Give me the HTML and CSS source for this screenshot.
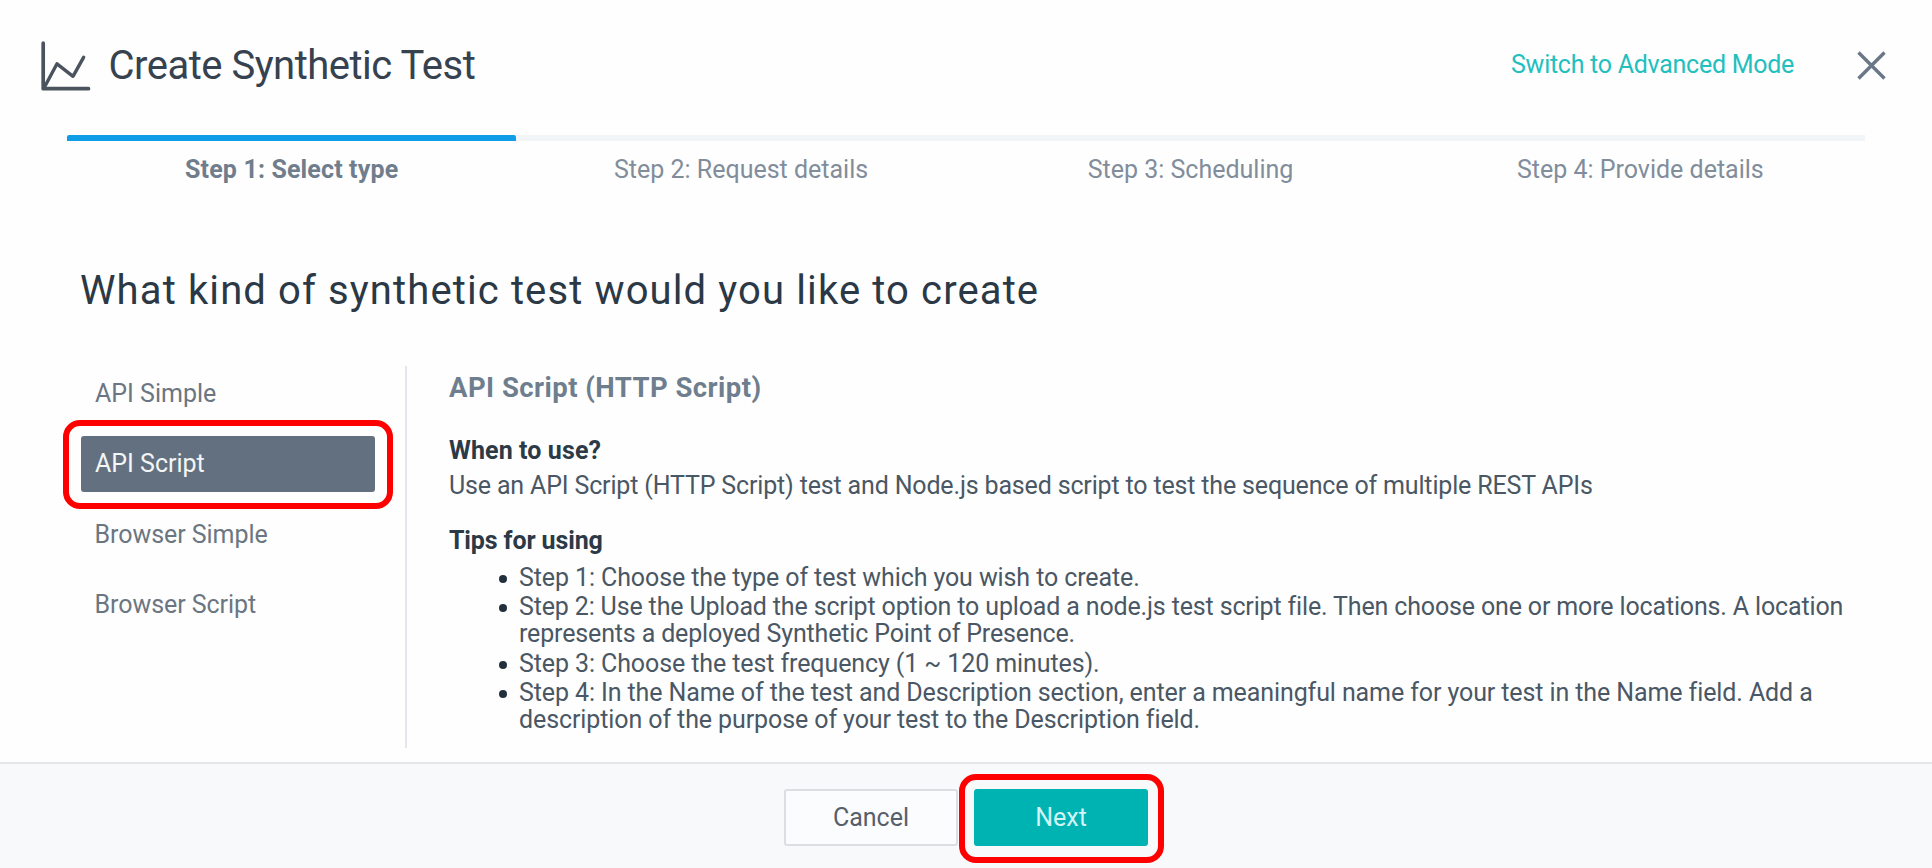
FILE: index.html
```html
<!DOCTYPE html>
<html lang="en">
<head>
<meta charset="utf-8">
<title>Create Synthetic Test</title>
<link rel="stylesheet" href="styles.css">
</head>
<body>
<div class="dialog">
  <header class="header">
    <svg class="chart-icon" width="52" height="54" viewBox="0 0 52 54" fill="none" stroke="#4b545e" stroke-linecap="round" stroke-linejoin="round">
      <path d="M4.2 4.2V49.7H49.5" stroke-width="3.7"/>
      <path d="M5 49L18 24.8L34 37.3L44.6 18.3" stroke-width="3.4"/>
    </svg>
    <h1 class="title">Create Synthetic Test</h1>
    <a class="mode-link">Switch to Advanced Mode</a>
    <svg class="close-icon" width="29" height="29" viewBox="0 0 29 29" stroke="#697788" stroke-width="3.4">
      <path d="M1.5 1.5L27.5 27.5M27.5 1.5L1.5 27.5"/>
    </svg>
  </header>

  <ol class="steps">
    <li class="step step-active">Step 1: Select type</li>
    <li class="step">Step 2: Request details</li>
    <li class="step">Step 3: Scheduling</li>
    <li class="step">Step 4: Provide details</li>
  </ol>

  <h2 class="question">What kind of synthetic test would you like to create</h2>

  <main class="main">
    <nav class="types">
      <div class="type">API Simple</div>
      <div class="type type-selected">API Script<span class="highlight"></span></div>
      <div class="type type-browser">Browser Simple</div>
      <div class="type type-browser">Browser Script</div>
    </nav>
    <section class="detail">
      <h3 class="detail-title">API Script (HTTP Script)</h3>
      <h4 class="when">When to use?</h4>
      <p class="usage">Use an API Script (HTTP Script) test and Node.js based script to test the sequence of multiple REST APIs</p>
      <h4 class="tips-title">Tips for using</h4>
      <ul class="tips">
        <li>Step 1: Choose the type of test which you wish to create.</li>
        <li class="tip-upload">Step 2: Use the Upload the script option to upload a node.js test script file. Then choose one or more locations. A location<br>represents a deployed Synthetic Point of Presence.</li>
        <li>Step 3: Choose the test frequency (1 ~ 120 minutes).</li>
        <li>Step 4: In the Name of the test and Description section, enter a meaningful name for your test in the Name field. Add a<br>description of the purpose of your test to the Description field.</li>
      </ul>
    </section>
  </main>

  <footer class="footer">
    <div class="button cancel">Cancel</div>
    <div class="button next">Next<span class="highlight"></span></div>
  </footer>
</div>
</body>
</html>
```
FILE: styles.css
```css
* { box-sizing: border-box; }

body {
  margin: 0;
  background: #fefefe;
  font-family: Roboto, "Noto Sans", sans-serif;
  font-size: 25px;
  color: #4a5764;
}

h1, h2, h3, h4, p, ul, ol { margin: 0; padding: 0; font-weight: 400; }

.dialog {
  display: flex;
  flex-direction: column;
  width: 1932px;
  height: 868px;
  overflow: hidden;
}

.header {
  display: flex;
  align-items: center;
  height: 131px;
  padding: 0 46px 0 39px;
}

.chart-icon { flex: none; }

.title {
  margin-left: 17.5px;
  font-size: 40px;
  line-height: 48px;
  letter-spacing: -0.5px;
  color: #36424f;
}

.mode-link {
  margin-left: auto;
  padding-bottom: 2px;
  line-height: 32px;
  letter-spacing: -0.27px;
  color: #22bfbf;
}

.close-icon { margin-left: 63px; }

.steps {
  display: flex;
  margin: 4px 67px 0;
  list-style: none;
}

.step {
  width: 449.4px;
  padding-top: 13px;
  border-top: 6px solid #f1f5f7;
  line-height: 32px;
  text-align: center;
  color: #818d9b;
}

.step:last-child { padding-left: 1px; }

.step-active {
  border-top: 0;
  padding-top: 19px;
  background: linear-gradient(#109de8, #109de8) 0 0 / 100% 6px no-repeat;
  border-radius: 2px;
  font-weight: 700;
  letter-spacing: 0.14px;
  color: #6f7d8d;
}

.question {
  margin: 81px 0 0 80px;
  font-size: 40px;
  line-height: 48px;
  letter-spacing: 1.12px;
  color: #2b3845;
}

.main {
  display: flex;
  height: 382px;
  margin: 51px 0 0 81px;
}

.types {
  display: flex;
  flex-direction: column;
  gap: 14.3px;
  width: 326px;
  padding-right: 30px;
  border-right: 2px solid #e3e6ea;
}

.type {
  position: relative;
  height: 56px;
  padding-left: 14px;
  line-height: 56px;
  color: #6b7682;
}

.type-selected {
  border-radius: 3px;
  background: #62707f;
  color: #f3f5f7;
}

.type-browser { padding-left: 13.5px; letter-spacing: -0.05px; }

.highlight {
  position: absolute;
  inset: -16px -18px -17px;
  border: 6px solid #f00;
  border-radius: 17px;
}

.detail { padding: 5px 0 0 42px; }

.detail-title {
  font-size: 27.5px;
  font-weight: 700;
  line-height: 34px;
  letter-spacing: 0.45px;
  color: #6f7e8e;
}

.when, .tips-title {
  font-weight: 700;
  line-height: 34px;
  color: #2c3946;
}

.when { margin-top: 29px; letter-spacing: 0.1px; }

.usage {
  margin-top: 1px;
  line-height: 34px;
  letter-spacing: -0.16px;
}

.tips-title { margin-top: 21px; letter-spacing: -0.12px; }

.tips {
  display: flex;
  flex-direction: column;
  gap: 1.9px;
  margin-top: 6px;
  padding-left: 70px;
  line-height: 27.3px;
  letter-spacing: -0.1px;
  white-space: nowrap;
  list-style: none;
}

.tips li { position: relative; }

.tips li::before {
  content: "";
  position: absolute;
  left: -20.5px;
  top: 11px;
  width: 8px;
  height: 8px;
  border-radius: 50%;
  background: #22303e;
}

.tip-upload { letter-spacing: -0.15px; }

.footer {
  display: flex;
  justify-content: center;
  gap: 16px;
  height: 106px;
  margin-top: auto;
  padding-top: 25px;
  border-top: 2px solid #e4e7ea;
  background: #f7f9fb;
}

.button {
  position: relative;
  width: 174px;
  height: 57px;
  border-radius: 3px;
  line-height: 57px;
  text-align: center;
}

.cancel {
  border: 2px solid #dcdfe1;
  background: #fbfcfd;
  line-height: 54px;
  color: #565f6a;
}

.next {
  background: #00b3b3;
  color: #d5f3f3;
}

.next .highlight { inset: -15px -16px -17px -15px; }
```
